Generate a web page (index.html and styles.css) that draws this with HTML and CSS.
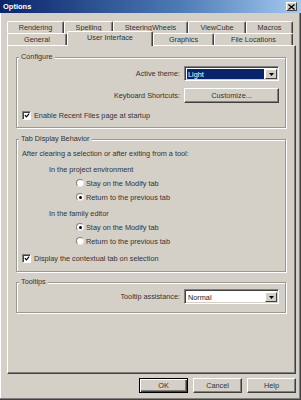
FILE: index.html
```html
<!DOCTYPE html>
<html>
<head>
<meta charset="utf-8">
<title>Options</title>
<link rel="stylesheet" href="styles.css">
</head>
<body>
<div class="window">
  <div class="titlebar">
    <span class="title">Options</span>
    <span class="close"><svg width="7" height="6" viewBox="0 0 7 6"><path d="M0.5 0.5 L6.5 5.5 M6.5 0.5 L0.5 5.5" stroke="#000" stroke-width="1.3" fill="none"/></svg></span>
  </div>
  <div class="client">
    <div class="tabs">
      <div class="tabrow row1">
        <div class="tab">Rendering</div>
        <div class="tab">Spelling</div>
        <div class="tab">SteeringWheels</div>
        <div class="tab">ViewCube</div>
        <div class="tab">Macros</div>
      </div>
      <div class="tabrow row2">
        <div class="tab">General</div>
        <div class="tab selected">User Interface</div>
        <div class="tab">Graphics</div>
        <div class="tab">File Locations</div>
      </div>
    </div>
    <div class="panel">
      <fieldset class="group group-config">
        <legend>Configure</legend>
        <div class="formrow">
          <span class="label">Active theme:</span>
          <div class="combo"><span class="value highlighted">Light</span><span class="arrow"><svg width="5" height="3" viewBox="0 0 5 3"><path d="M0 0 H5 L2.5 3 Z" fill="#000"/></svg></span></div>
        </div>
        <div class="formrow row-gap">
          <span class="label">Keyboard Shortcuts:</span>
          <div class="button">Customize...</div>
        </div>
        <div class="check check-config"><span class="box"><svg width="7" height="7" viewBox="0 0 7 7"><path d="M1 3 L2.8 5 L6 1.2" stroke="#000" stroke-width="1.4" fill="none"/></svg></span>Enable Recent Files page at startup</div>
      </fieldset>

      <fieldset class="group group-tabs">
        <legend>Tab Display Behavior</legend>
        <div class="line">After clearing a selection or after exiting from a tool:</div>
        <div class="line sub">In the project environment</div>
        <div class="line radio-line"><span class="radio"></span>Stay on the Modify tab</div>
        <div class="line radio-line"><span class="radio on"></span>Return to the previous tab</div>
        <div class="line sub">In the family editor</div>
        <div class="line radio-line"><span class="radio on"></span>Stay on the Modify tab</div>
        <div class="line radio-line"><span class="radio"></span>Return to the previous tab</div>
        <div class="line check check-tabs"><span class="box"><svg width="7" height="7" viewBox="0 0 7 7"><path d="M1 3 L2.8 5 L6 1.2" stroke="#000" stroke-width="1.4" fill="none"/></svg></span>Display the contextual tab on selection</div>
      </fieldset>

      <fieldset class="group group-tips">
        <legend>Tooltips</legend>
        <div class="formrow">
          <span class="label">Tooltip assistance:</span>
          <div class="combo"><span class="value">Normal</span><span class="arrow"><svg width="5" height="3" viewBox="0 0 5 3"><path d="M0 0 H5 L2.5 3 Z" fill="#000"/></svg></span></div>
        </div>
      </fieldset>
    </div>
    <div class="buttons">
      <div class="button dlg default">OK</div>
      <div class="button dlg">Cancel</div>
      <div class="button dlg">Help</div>
    </div>
  </div>
</div>
</body>
</html>
```

FILE: styles.css
```css
html, body {
  margin: 0;
  padding: 0;
}
body {
  width: 301px;
  height: 400px;
  overflow: hidden;
  background: #d4d0c8;
  font-family: "Liberation Sans", Arial, sans-serif;
  font-size: 7.3px;
  color: #333;
}
.window {
  height: 400px;
  display: flex;
  flex-direction: column;
}
.titlebar {
  height: 13px;
  flex: none;
  display: flex;
  align-items: center;
  justify-content: space-between;
  background: linear-gradient(to right, #0a246a 0%, #4d7bb5 60%, #a6caf0 100%);
  padding: 0 4px 0 3px;
}
.title {
  color: #fff;
  font-weight: bold;
  font-size: 7.5px;
  line-height: 10px;
}
.close {
  width: 11px;
  height: 9px;
  box-sizing: border-box;
  background: #d4d0c8;
  border-top: 1px solid #fff;
  border-left: 1px solid #fff;
  border-right: 1px solid #404040;
  border-bottom: 1px solid #404040;
  display: flex;
  align-items: center;
  justify-content: center;
}
.client {
  flex: 1;
  display: flex;
  flex-direction: column;
  padding: 8px 5px 7px 7px;
  box-shadow: inset -1px -1px 0 #404040, inset -2px -2px 0 #808080, inset 1px 0 0 #fff;
}
.tabs {
  width: 286px;
  flex: none;
}
.tabrow {
  display: grid;
  height: 12px;
  align-items: start;
}
.row1 {
  grid-template-columns: 57px 49px 75px 58px 47px;
}
.row2 {
  grid-template-columns: 60px 86px 61px 79px;
}
.tab {
  height: 12px;
  box-sizing: border-box;
  border-top: 1px solid #fff;
  border-left: 1px solid #fff;
  border-right: 1px solid #404040;
  box-shadow: inset -1px 0 0 #808080;
  border-radius: 2px 2px 0 0;
  background: #d4d0c8;
  text-align: center;
  line-height: 11px;
  white-space: nowrap;
}
.tab.selected {
  height: 15px;
  margin-top: -2px;
  position: relative;
  z-index: 1;
  line-height: 11px;
}
.panel {
  flex: 1;
  display: flex;
  flex-direction: column;
  box-sizing: border-box;
  border-top: 1px solid #fff;
  border-left: 1px solid #fff;
  border-right: 1px solid #404040;
  border-bottom: 1px solid #404040;
  box-shadow: inset -1px -1px 0 #808080;
  padding: 6px 9px 0 8px;
}
.group {
  margin: 0;
  border: 1px solid #9a9893;
  box-shadow: 1px 1px 0 #fff, inset 1px 1px 0 #fff;
  padding: 0 6px 0 5px;
  min-width: 0;
}
.group legend {
  padding: 0 2px;
  margin-left: -3px;
  line-height: 10px;
  background: #d4d0c8;
}
.group-config {
  padding-top: 4px;
  padding-bottom: 6px;
}
.group-tabs {
  margin-top: 6px;
  padding-top: 2px;
  padding-bottom: 6px;
}
.group-tips {
  margin-top: 5px;
  padding-top: 2px;
  padding-bottom: 8px;
}
.formrow {
  display: grid;
  grid-template-columns: 1fr 95px;
  column-gap: 4px;
  align-items: center;
  height: 15px;
}
.formrow.row-gap {
  margin-top: 7px;
}
.label {
  text-align: right;
  white-space: nowrap;
}
.combo {
  height: 15px;
  box-sizing: border-box;
  background: #fff;
  border-top: 1px solid #808080;
  border-left: 1px solid #808080;
  border-right: 1px solid #fff;
  border-bottom: 1px solid #fff;
  box-shadow: inset 1px 1px 0 #404040, inset -1px -1px 0 #d4d0c8;
  padding: 2px 1px 1px 2px;
  display: flex;
}
.value {
  flex: 1;
  line-height: 11px;
  padding-left: 1px;
  color: #222;
}
.value.highlighted {
  background: #0a246a;
  color: #fff;
  margin-right: 1px;
}
.arrow {
  width: 12px;
  box-sizing: border-box;
  background: #d4d0c8;
  border-top: 1px solid #fff;
  border-left: 1px solid #fff;
  border-right: 1px solid #404040;
  border-bottom: 1px solid #404040;
  display: flex;
  align-items: center;
  justify-content: center;
}
.button {
  height: 15px;
  box-sizing: border-box;
  background: #d4d0c8;
  border-top: 1px solid #fff;
  border-left: 1px solid #fff;
  border-right: 1px solid #404040;
  border-bottom: 1px solid #404040;
  box-shadow: inset -1px -1px 0 #808080;
  display: flex;
  align-items: center;
  justify-content: center;
  line-height: 11px;
}
.check {
  display: flex;
  align-items: center;
  gap: 3px;
}
.check-config {
  margin-top: 6px;
  height: 12px;
}
.box {
  width: 9px;
  height: 9px;
  box-sizing: border-box;
  background: #fff;
  border-top: 1px solid #808080;
  border-left: 1px solid #808080;
  border-right: 1px solid #fff;
  border-bottom: 1px solid #fff;
  box-shadow: inset 1px 1px 0 #404040;
  display: flex;
  align-items: center;
  justify-content: center;
  flex: none;
}
.box svg {
  margin: 1px 0 0 1px;
}
.line {
  height: 14px;
  display: flex;
  align-items: center;
  white-space: nowrap;
}
.line.sub {
  margin-top: 2px;
  padding-left: 27px;
}
.radio-line {
  padding-left: 54px;
  gap: 2px;
}
.radio {
  width: 8px;
  height: 8px;
  box-sizing: border-box;
  border-radius: 50%;
  background: #fff;
  border: 1px solid;
  border-color: #808080 #e8e8e8 #e8e8e8 #808080;
  display: flex;
  align-items: center;
  justify-content: center;
  flex: none;
}
.radio.on::after {
  content: "";
  width: 3px;
  height: 3px;
  border-radius: 50%;
  background: #000;
}
.check-tabs {
  margin-top: 3px;
}
.buttons {
  flex: none;
  display: flex;
  justify-content: flex-end;
  gap: 5px;
  margin-top: 4px;
}
.button.dlg {
  width: 49px;
}
.button.default {
  border: 1px solid #000;
  box-shadow: inset 1px 1px 0 #fff, inset -1px -1px 0 #404040, inset -2px -2px 0 #808080;
}
```
